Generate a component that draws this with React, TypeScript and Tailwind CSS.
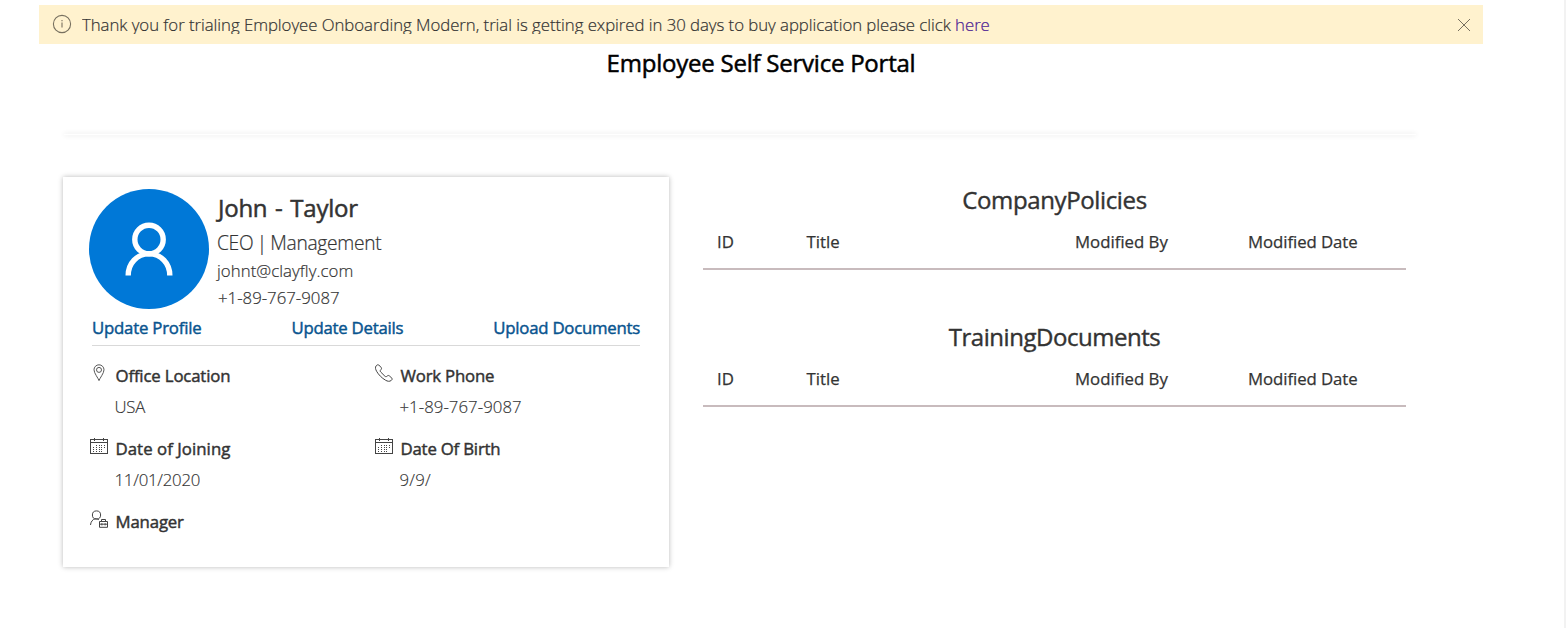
import React from "react";

function InfoIcon() {
  return (
    <svg width="20" height="20" viewBox="0 0 20 20" fill="none" stroke="#77705f" className="shrink-0">
      <circle cx="10" cy="10" r="8.6" strokeWidth="1.1" />
      <path d="M10 8.4V13.6M10 6.1V7.3" strokeWidth="1.1" />
    </svg>
  );
}

function CloseIcon() {
  return (
    <svg width="14" height="14" viewBox="0 0 14 14" fill="none" stroke="#77705f" strokeWidth="1">
      <path d="M1 1L13 13M13 1L1 13" />
    </svg>
  );
}

function PinIcon() {
  return (
    <svg width="18" height="18" viewBox="0 0 18 18" fill="none" stroke="#444" strokeWidth="0.9">
      <path d="M9 16.6C8.4 14.4 4 9.2 4 5.8A5 5 0 0 1 14 5.8C14 9.2 9.6 14.4 9 16.6Z" />
      <circle cx="9" cy="5.9" r="2.5" />
    </svg>
  );
}

function PhoneIcon() {
  return (
    <svg width="18" height="18" viewBox="0 0 18 18" fill="none" stroke="#444" strokeWidth="1" strokeLinejoin="round">
      <path d="M1.1 1.9C1.9 1 2.9 0.4 3.8 1L6 3.3C6.9 4.3 6.5 5.1 5.8 5.8C5.1 6.5 5 7.2 5.7 8L9.9 12.2C10.7 12.9 11.4 12.8 12.1 12.1C12.9 11.4 13.7 11.2 14.5 12L16.9 14.2C17.5 15 17 15.8 16.3 16.4C14.6 17.8 12.5 17.4 10.5 16.2C6.8 14 3.6 10.8 1.6 7.3C0.5 5.2 0 3.4 1.1 1.9Z" />
    </svg>
  );
}

function CalendarIcon() {
  return (
    <svg width="18" height="18" viewBox="0 0 18 18" fill="none" stroke="#444" shapeRendering="crispEdges">
      <path d="M0.5 2.5H17.5V16.5H0.5Z" strokeWidth="1" />
      <path d="M0.5 5.5H17.5M4.5 1V4M13.5 1V4" strokeWidth="1" />
      <path d="M6.5 8V15M9.5 8V15M11.5 8V15M14.5 8V12M3.5 10V15" strokeDasharray="1 1" strokeWidth="1" />
    </svg>
  );
}

function ManagerIcon() {
  return (
    <svg width="18" height="18" viewBox="0 0 18 18" fill="none" stroke="#444" strokeWidth="1">
      <circle cx="6.5" cy="5" r="4.1" />
      <path d="M0.5 15C0.8 11.7 2.6 9.5 5 8.8C6.6 8.6 7.9 9 8.9 9.8" />
      <path d="M9.5 11.5H17.5V17.3H9.5ZM9.5 14.2H17.5M11.5 11.5V9.5H15.5V11.5M11.9 13.2V15.4M15.1 13.2V15.4" />
    </svg>
  );
}

function Avatar() {
  return (
    <div className="flex h-[120px] w-[120px] shrink-0 items-center justify-center rounded-full bg-[#0078d7]">
      <svg width="48" height="54" viewBox="0 0 48 54" fill="none" stroke="#fff" strokeWidth="5.4">
        <circle cx="24" cy="17.5" r="14.2" />
        <path d="M3.2 53.5C3.2 41.5 12 31.9 24 31.9S44.8 41.5 44.8 53.5" />
      </svg>
    </div>
  );
}

function Field({ icon, label, value, labelClass, valueClass }: {
  icon: React.ReactNode;
  label: string;
  value?: string;
  labelClass: string;
  valueClass?: string;
}) {
  return (
    <div className="flex h-[73px] w-[285px] whitespace-nowrap">
      <div className="w-[25.5px] shrink-0">{icon}</div>
      <div className="pt-px">
        <div className={`h-[31px] text-[16.8px] leading-[22px] [-webkit-text-stroke:0.45px] ${labelClass}`}>{label}</div>
        {value && <div className={`-ml-px text-[16.8px] leading-[22px] font-light [-webkit-text-stroke:0.15px] ${valueClass}`}>{value}</div>}
      </div>
    </div>
  );
}

function DocumentList({ title, titleClass }: { title: string; titleClass: string }) {
  return (
    <section className="h-[137px] w-[703px]">
      <h2 className={`text-center text-[24px] leading-8 [-webkit-text-stroke:0.4px] ${titleClass}`}>{title}</h2>
      <div className="mt-[15px] flex h-[39px] border-b-2 border-[#c8bbbd] pl-[14px] text-[16.8px] leading-[22px] [-webkit-text-stroke:0.25px]">
        <div className="w-[89.5px]">ID</div>
        <div className="w-[268.5px]">Title</div>
        <div className="w-[173px]">Modified By</div>
        <div className="tracking-[-0.07px]">Modified Date</div>
      </div>
    </section>
  );
}

export default function App() {
  return (
    <div className="flex h-[628px] w-[1566px] overflow-hidden bg-white font-['Open_Sans',sans-serif] text-[#333]">
      <div className="flex-1 pt-[5px]">
        <div className="ml-[39px] flex h-[39px] w-[1444px] items-start bg-[#fff2ce] pr-3 pl-[13px]">
          <div className="pt-[9px]"><InfoIcon /></div>
          <div className="mt-[7px] ml-[10px] h-[22px] flex-1 overflow-hidden text-[16.8px] leading-[26px] font-light whitespace-nowrap tracking-[-0.045px] [-webkit-text-stroke:0.2px]">
            Thank you for trialing Employee Onboarding Modern, trial is getting expired in 30 days to buy application please click{" "}
            <a className="text-[#4b1b93]">here</a>
          </div>
          <div className="pt-[13px]"><CloseIcon /></div>
        </div>
        <h1 className="ml-[39px] w-[1444px] pt-[3px] text-center text-[24px] leading-8 tracking-[-0.23px] text-black [-webkit-text-stroke:0.5px]">
          Employee Self Service Portal
        </h1>
        <div className="mt-[55px] ml-[64px] h-px w-[1352px] bg-white shadow-[0_0_5px_rgba(0,0,0,0.2)]" />
        <main className="mt-[42px] ml-[63px] flex">
          <section className="h-[390px] w-[606px] bg-white shadow-[0_0_5px_rgba(0,0,0,0.28)]">
            <div className="flex pt-3 pl-[26px]">
              <Avatar />
              <div className="pt-[3px] pl-2 font-light whitespace-nowrap [-webkit-text-stroke:0.2px]">
                <div className="h-[37px] pl-px text-[24px] leading-8 font-normal tracking-[-0.25px] [word-spacing:1.8px] [-webkit-text-stroke:0.5px]">John - Taylor</div>
                <div className="h-[28px] text-[19.2px] leading-7 tracking-[-0.3px] [word-spacing:-1.2px]">CEO | Management</div>
                <div className="h-[27px] text-[16.8px] leading-7 tracking-[0.05px]">johnt@clayfly.com</div>
                <div className="pl-px text-[16.8px] leading-7">+1-89-767-9087</div>
              </div>
            </div>
            <nav className="-mt-[3px] ml-[29px] flex h-[37px] w-[548px] justify-between border-b border-[#d9d9d9] pt-2 text-[16.8px] leading-[22px] whitespace-nowrap text-[#09548f] [-webkit-text-stroke:0.45px]">
              <a className="tracking-[-0.22px]">Update Profile</a>
              <a className="tracking-[-0.25px]">Update Details</a>
              <a className="tracking-[-0.25px]">Upload Documents</a>
            </nav>
            <div className="mt-[18px] ml-[27px] flex flex-wrap">
              <Field icon={<PinIcon />} label="Office Location" value="USA" labelClass="tracking-[-0.16px]" valueClass="tracking-[-0.2px]" />
              <Field icon={<PhoneIcon />} label="Work Phone" value="+1-89-767-9087" labelClass="tracking-[-0.2px]" valueClass="tracking-[0.04px]" />
              <Field icon={<CalendarIcon />} label="Date of Joining" value="11/01/2020" labelClass="tracking-[0.05px]" valueClass="tracking-[-0.25px]" />
              <Field icon={<CalendarIcon />} label="Date Of Birth" value="9/9/" labelClass="tracking-[-0.2px]" valueClass="tracking-[0.2px]" />
              <Field icon={<ManagerIcon />} label="Manager" labelClass="tracking-[-0.16px]" />
            </div>
          </section>
          <div className="ml-[34px] pt-[7px]">
            <DocumentList title="CompanyPolicies" titleClass="tracking-[-0.37px]" />
            <DocumentList title="TrainingDocuments" titleClass="tracking-[-0.47px]" />
          </div>
        </main>
      </div>
      <div className="w-[2px] bg-[#f2f2f2]" />
    </div>
  );
}
